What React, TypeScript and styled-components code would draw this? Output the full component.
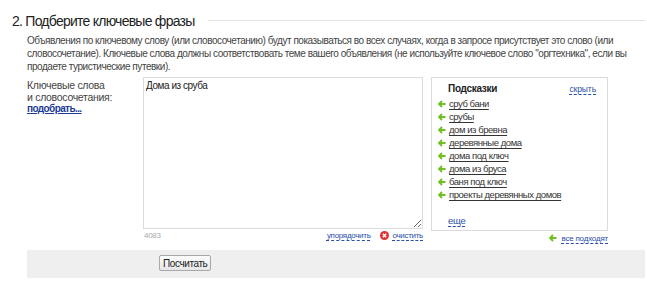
import React from "react";
import styled, { createGlobalStyle } from "styled-components";

const FONT = `"Liberation Sans", Arial, sans-serif`;

const Global = createGlobalStyle`
  html, body { margin: 0; padding: 0; background: #fff; }
  body { font-family: ${FONT}; color: #333; }
`;

const Page = styled.div`
  width: 647px;
  padding-top: 10px;
`;

const Header = styled.div`
  display: flex;
  align-items: center;
  padding-left: 12px;
  height: 21px;
`;

const Title = styled.h2`
  margin: 0;
  font-size: 14px;
  letter-spacing: -0.75px;
  font-weight: normal;
  color: #222;
  white-space: nowrap;
`;

const Rule = styled.div`
  flex: 1;
  margin-left: 13px;
  margin-right: 2px;
  border-top: 1px solid #e4e4e4;
`;

const Body = styled.div`
  padding-left: 27px;
`;

const Description = styled.p`
  margin: 3px 0 0;
  width: 610px;
  font-size: 10px;
  letter-spacing: -0.45px;
  line-height: 13px;
  color: #444;
`;

const FormRow = styled.div`
  display: grid;
  grid-template-columns: 108px 280px 177px;
  column-gap: 8px;
  margin-top: 4px;
`;

const Label = styled.div`
  font-size: 10.5px;
  letter-spacing: -0.3px;
  line-height: 11.5px;
  color: #444;
  padding-top: 3px;
`;

const BoldLink = styled.a`
  color: #1c3c97;
  font-size: 10px;
  letter-spacing: -0.6px;
  font-weight: bold;
  text-decoration: underline;
`;

const Column = styled.div`
  display: flex;
  flex-direction: column;
`;

const TextArea = styled.textarea`
  box-sizing: border-box;
  width: 280px;
  height: 152px;
  margin: 0;
  padding: 2px 2px;
  border: 1px solid #dcdcdc;
  font-family: ${FONT};
  font-size: 10px;
  letter-spacing: -0.45px;
  color: #222;
  resize: both;
  outline: none;
`;

const UnderRow = styled.div`
  display: flex;
  align-items: center;
  height: 13px;
  font-size: 8px;
  letter-spacing: -0.3px;
`;

const Counter = styled.span`
  color: #aaa;
  margin-left: 1px;
  flex: 1;
`;

const SmallLink = styled.a<{ $dark?: boolean }>`
  color: ${(p) => (p.$dark ? "#333" : "#2a4fa8")};
  text-decoration: underline;
  text-decoration-style: ${(p) => (p.$dark ? "solid" : "dashed")};
  text-underline-offset: 2px;
  cursor: pointer;
`;

const ActionGroup = styled.span`
  display: inline-flex;
  align-items: center;
  gap: 4px;
  margin-left: 9px;
`;

const Suggest = styled.div`
  box-sizing: border-box;
  height: 154px;
  border: 1px solid #dcdcdc;
  padding: 5px 11px 0 6px;
  display: flex;
  flex-direction: column;
`;

const SuggestHead = styled.div`
  display: flex;
  justify-content: space-between;
  align-items: flex-end;
  padding-left: 10px;
  margin-bottom: 3px;
`;

const SuggestTitle = styled.span`
  font-size: 10px;
  letter-spacing: -0.3px;
  font-weight: bold;
  color: #222;
`;

const HideLink = styled(SmallLink)`
  font-size: 8.5px;
  letter-spacing: -0.1px;
`;

const List = styled.ul`
  list-style: none;
  margin: 0;
  padding: 0;
`;

const Item = styled.li`
  display: flex;
  align-items: center;
  height: 13px;
  gap: 3px;
  font-size: 9.5px;
  letter-spacing: -0.45px;
`;

const More = styled.div`
  margin-top: auto;
  margin-bottom: 4px;
  padding-left: 10px;
  font-size: 9.5px;
  letter-spacing: -0.3px;
`;

const AllRow = styled.div`
  display: flex;
  justify-content: flex-end;
  align-items: center;
  gap: 4px;
  height: 14px;
  font-size: 8px;
  letter-spacing: -0.2px;
`;

const Footer = styled.div`
  margin: 5px 2px 0 27px;
  height: 28px;
  background: #efeff0;
  display: flex;
  align-items: flex-start;
  box-sizing: border-box;
  padding: 5px 0 0 132px;
`;

const Button = styled.button`
  font-family: ${FONT};
  font-size: 10px;
  letter-spacing: -0.4px;
  color: #222;
  height: 16px;
  padding: 0 3px;
  border: 1px solid #a8a8a8;
  border-radius: 2px;
  background: linear-gradient(#fdfdfd, #e6e6e6);
`;

const Arrow = () => (
  <svg width="8" height="8" viewBox="0 0 8 8">
    <path d="M4 1 L1 4 L4 7 M1 4 H7.5" stroke="#6fbf1e" strokeWidth="1.8" fill="none" />
  </svg>
);

const ClearIcon = () => (
  <svg width="9" height="9" viewBox="0 0 9 9">
    <circle cx="4.5" cy="4.5" r="4.5" fill="#e03232" />
    <path d="M2.8 2.8 L6.2 6.2 M6.2 2.8 L2.8 6.2" stroke="#fff" strokeWidth="1.4" />
  </svg>
);

const suggestions = [
  "сруб бани",
  "срубы",
  "дом из бревна",
  "деревянные дома",
  "дома под ключ",
  "дома из бруса",
  "баня под ключ",
  "проекты деревянных домов",
];

export default function App() {
  return (
    <Page>
      <Global />
      <Header>
        <Title>2. Подберите ключевые фразы</Title>
        <Rule />
      </Header>
      <Body>
        <Description>
          Объявления по ключевому слову (или словосочетанию) будут показываться во всех случаях, когда в запросе присутствует это слово (или
          <br />
          словосочетание). Ключевые слова должны соответствовать теме вашего объявления (не используйте ключевое слово "оргтехника", если вы
          <br />
          продаете туристические путевки).
        </Description>
        <FormRow>
          <Label>
            Ключевые слова
            <br />
            и словосочетания:
            <br />
            <BoldLink href="#">подобрать...</BoldLink>
          </Label>
          <Column>
            <TextArea defaultValue="Дома из сруба" />
            <UnderRow>
              <Counter>4083</Counter>
              <SmallLink>упорядочить</SmallLink>
              <ActionGroup>
                <ClearIcon />
                <SmallLink>очистить</SmallLink>
              </ActionGroup>
            </UnderRow>
          </Column>
          <Column>
            <Suggest>
              <SuggestHead>
                <SuggestTitle>Подсказки</SuggestTitle>
                <HideLink>скрыть</HideLink>
              </SuggestHead>
              <List>
                {suggestions.map((s) => (
                  <Item key={s}>
                    <Arrow />
                    <SmallLink $dark>{s}</SmallLink>
                  </Item>
                ))}
              </List>
              <More>
                <SmallLink>еще</SmallLink>
              </More>
            </Suggest>
            <AllRow>
              <Arrow />
              <SmallLink>все подходят</SmallLink>
            </AllRow>
          </Column>
        </FormRow>
      </Body>
      <Footer>
        <Button>Посчитать</Button>
      </Footer>
    </Page>
  );
}
